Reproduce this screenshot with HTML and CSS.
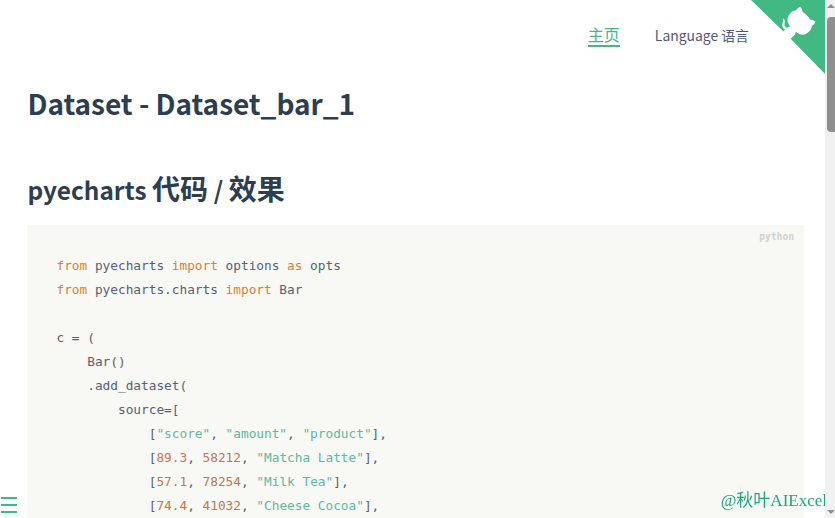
FILE: index.html
```
<!DOCTYPE html>
<html lang="zh">
<head>
<meta charset="utf-8">
<title>Dataset - Dataset_bar_1</title>
<link rel="stylesheet" href="styles.css">
</head>
<body>
<main class="page">
  <nav class="nav">
    <a class="nav-link active">主页</a>
    <a class="nav-link">Language 语言</a>
  </nav>
  <h1 class="title">Dataset - Dataset_bar_1</h1>
  <h2 class="subtitle">pyecharts <span class="cjk">代码</span> / <span class="cjk">效果</span></h2>
  <div class="code-block">
    <span class="lang">python</span>
    <div class="code">
      <div class="line"><span class="k">from</span> pyecharts <span class="k">import</span> options <span class="k">as</span> opts</div>
      <div class="line"><span class="k">from</span> pyecharts.charts <span class="k">import</span> Bar</div>
      <div class="line blank"></div>
      <div class="line">c = (</div>
      <div class="line">    Bar()</div>
      <div class="line">    .add_dataset(</div>
      <div class="line">        source=[</div>
      <div class="line">            [<span class="s">"score"</span>, <span class="s">"amount"</span>, <span class="s">"product"</span>],</div>
      <div class="line">            [<span class="n">89.3</span>, <span class="n">58212</span>, <span class="s">"Matcha Latte"</span>],</div>
      <div class="line">            [<span class="n">57.1</span>, <span class="n">78254</span>, <span class="s">"Milk Tea"</span>],</div>
      <div class="line">            [<span class="n">74.4</span>, <span class="n">41032</span>, <span class="s">"Cheese Cocoa"</span>],</div>
    </div>
  </div>
</main>
<svg class="corner" viewBox="0 0 75 75" width="75" height="75" aria-hidden="true">
  <path class="corner-bg" d="M0 0H75V75L39 38L31 30Z"/>
  <g class="corner-cat" transform="translate(-9 -7) scale(.34)">
    <path d="M128.3,109.0 C113.8,99.7 119.0,89.6 119.0,89.6 C122.0,82.7 120.5,78.6 120.5,78.6 C119.2,72.0 123.4,76.3 123.4,76.3 C127.3,80.9 125.5,87.3 125.5,87.3 C122.9,97.6 130.6,101.9 134.4,103.2"/>
    <path d="M115.0,115.0 C114.9,115.1 118.7,116.5 119.8,115.4 L133.7,101.6 C136.9,99.2 139.9,98.4 142.2,98.6 C133.8,88.0 127.5,74.4 143.8,58.0 C148.5,53.4 154.0,51.2 159.7,51.0 C160.3,49.4 163.2,43.6 171.4,40.1 C171.4,40.1 176.1,42.5 178.8,56.2 C183.1,58.6 187.2,61.8 190.9,65.4 C194.5,69.0 197.7,73.2 200.1,77.6 C213.8,80.2 216.3,84.9 216.3,84.9 C212.7,93.1 206.9,96.0 205.4,96.6 C205.1,102.4 203.0,107.8 198.3,112.5 C181.9,128.9 168.3,122.5 157.7,114.1 C157.9,116.9 156.7,120.9 152.7,124.9 L141.0,136.5 C139.8,137.7 141.6,141.9 141.8,141.8 Z"/>
  </g>
</svg>
<div class="menu-toggle" aria-hidden="true"><i></i><i></i><i></i></div>
<div class="watermark">@秋叶AIExcel</div>
<div class="scrollbar" aria-hidden="true">
  <span class="arrow-up"></span>
  <span class="thumb"></span>
  <span class="arrow-down"></span>
</div>
</body>
</html>
```
FILE: styles.css
```
html, body {
  margin: 0;
  height: 100%;
  overflow: hidden;
  background: #fff;
}
body {
  font-family: "Noto Sans CJK SC", "Noto Sans", sans-serif;
  color: #2c3e50;
}
.page {
  height: 518px;
  overflow: hidden;
  padding: 0 31px 0 27px;
}
.nav {
  display: flex;
  justify-content: flex-end;
  align-items: flex-start;
  gap: 35px;
  padding: 24px 55px 0 0;
  height: 35px;
}
.nav-link {
  font-size: 13.900px;
  line-height: 22px;
  color: #515a74;
}
.nav-link.active {
  font-size: 16px;
  color: #42b983;
  border-bottom: 2px solid #42b983;
  line-height: 21px;
}
.title {
  margin: 23px 0 0 0.500px;
  font-size: 28px;
  line-height: 42px;
  font-weight: 600;
  letter-spacing: -0.03px;
}
.subtitle {
  margin: 47px 0 0 0.500px;
  height: 38px;
  font-size: 24.400px;
  line-height: 38px;
  font-weight: 600;
}
.cjk {
  font-size: 28px;
  line-height: 1;
  font-weight: 700;
}
.code-block {
  position: relative;
  margin-top: 16px;
  background: #f8f8f5;
  padding: 29px 30px 0;
}
.lang {
  position: absolute;
  top: 6px;
  right: 10px;
  font-size: 9.600px;
  font-weight: 700;
  color: #d0d2d0;
  font-family: "DejaVu Sans Mono", monospace;
}
.code {
  font-family: "DejaVu Sans Mono", monospace;
  font-size: 12.800px;
  letter-spacing: -0.02px;
  line-height: 24px;
  color: #566270;
  margin-left: -0.500px;
}
.line {
  white-space: pre;
  height: 24px;
}
.k { color: #d9803a; }
.s { color: #5fb8a0; }
.n { color: #c4764f; }
.corner {
  position: fixed;
  top: 0;
  right: 9px;
}
.corner-bg { fill: #42b983; }
.corner-cat { fill: #fff; }
.menu-toggle {
  position: fixed;
  left: 1px;
  top: 497px;
  width: 16px;
  display: flex;
  flex-direction: column;
  gap: 5px;
}
.menu-toggle i {
  display: block;
  height: 2px;
  background: #42b983;
}
.watermark {
  position: fixed;
  right: 8px;
  bottom: 6px;
  font-family: "Liberation Serif", "Noto Sans CJK SC", serif;
  font-size: 17px;
  line-height: 22px;
  color: #1fa57e;
}
.scrollbar {
  position: fixed;
  top: 0;
  right: 0;
  width: 10px;
  height: 518px;
  background: #f1f1f1;
}
.thumb {
  position: absolute;
  top: 17px;
  left: 2px;
  right: 0;
  height: 115px;
  border-radius: 4px 0 0 4px;
  background: #8f8f8f;
}
.arrow-up, .arrow-down {
  position: absolute;
  left: 2px;
  border-left: 4px solid transparent;
  border-right: 4px solid transparent;
}
.arrow-up { top: 4px; border-bottom: 4px solid #8f8f8f; }
.arrow-down { bottom: 4px; border-top: 4px solid #8f8f8f; }
```
